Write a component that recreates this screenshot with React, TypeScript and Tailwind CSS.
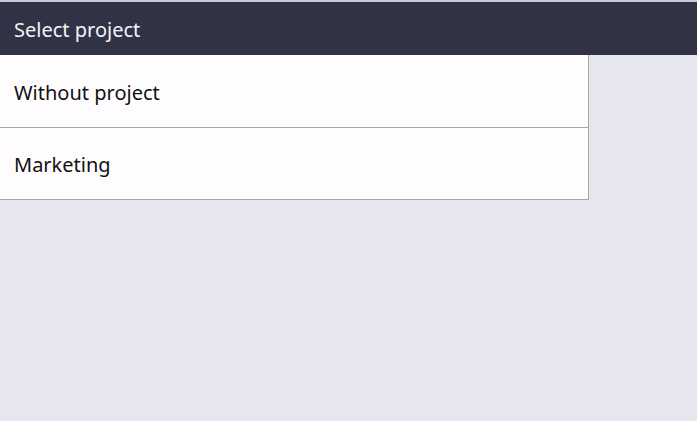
export default function App() {
  return (
    <div className="w-[697px] h-[421px] bg-[#e6e6ef] flex flex-col" style={{ fontFamily: '"Noto Sans", "DejaVu Sans", sans-serif' }}>
      <div className="h-[2px] bg-[#c8c8d2]" />
      <div className="h-[53px] bg-[#323245] flex items-center pt-[3px] pl-[14px] text-[#f4f4f8] text-[20px]">
        Select project
      </div>
      <div className="w-[589px] bg-[#fffcfe] border-r border-[#a8a8a8] border-b">
        <div className="h-[73px] flex items-center pt-[3px] pl-[14px] text-[#111] text-[20px] border-b border-[#a8a8a8]">
          Without project
        </div>
        <div className="h-[71px] flex items-center pt-[3px] pl-[14px] text-[#111] text-[20px]">
          Marketing
        </div>
      </div>
    </div>
  );
}
